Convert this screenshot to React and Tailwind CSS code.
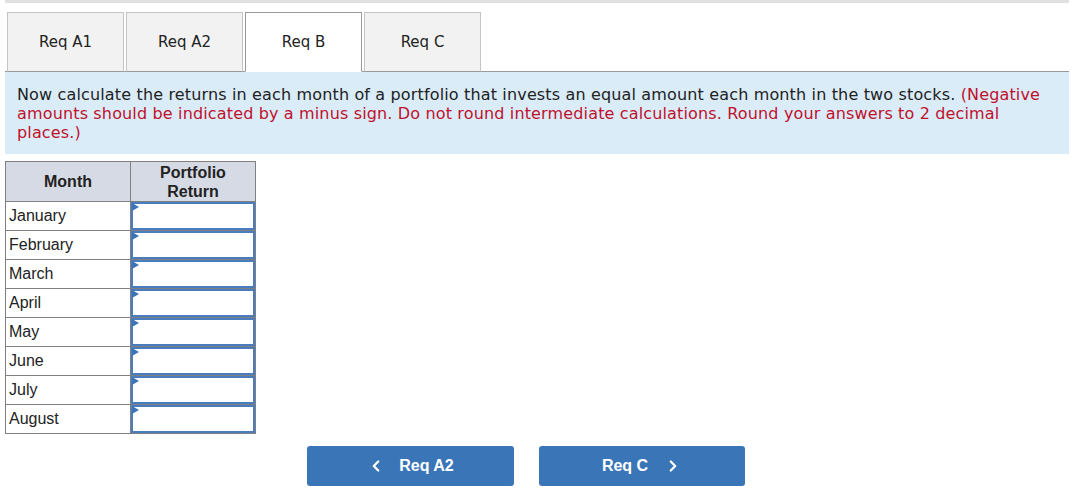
import React from "react";
import { ChevronLeft, ChevronRight } from "lucide-react";

const TABS = [
  { label: "Req A1", active: false },
  { label: "Req A2", active: false },
  { label: "Req B", active: true },
  { label: "Req C", active: false },
];

const MONTHS = ["January", "February", "March", "April", "May", "June", "July", "August"];

function AnswerCell() {
  return (
    <div className="relative h-[28px] w-full border-2 border-[#4a7dbf] bg-white">
      {/* little marker in the corner */}
      <div className="absolute left-[-1px] top-[-1px] h-0 w-0 border-y-[4px] border-l-[7px] border-y-transparent border-l-[#3d74b9]" />
      <input className="h-full w-full bg-transparent px-1 outline-none" />
    </div>
  );
}

export default function App() {
  return (
    <div className="h-[490px] w-[1085px] bg-white">
      <div className="ml-[5px] w-[1064px]">
        <div className="h-[3px] bg-[#e0e0e0]" />

        {/* tabs */}
        <div className="mt-[9px] flex gap-[2px] border-b border-[#999] pl-[2px] font-['DejaVu_Sans',Verdana,sans-serif] text-[15px] text-[#222]">
          {TABS.map((t) => (
            <div
              key={t.label}
              className={`-mb-px flex h-[60px] w-[117px] items-center justify-center border ${
                t.active
                  ? "border-[#999] border-b-white bg-white"
                  : "border-[#c4c4c4] border-b-[#999] bg-[#f2f2f2]"
              }`}
            >
              {t.label}
            </div>
          ))}
        </div>

        {/* instructions */}
        <div className="bg-[#dbecf9] px-[12px] pb-[12px] pt-[13px] font-['DejaVu_Sans',Verdana,sans-serif] text-[16px] leading-[19px] tracking-[0.15px] text-[#222]">
          Now calculate the returns in each month of a portfolio that invests an equal amount each month in the two stocks.{" "}
          <span className="text-[#c0102c]">
            (Negative amounts should be indicated by a minus sign. Do not round intermediate calculations. Round your answers to 2 decimal places.)
          </span>
        </div>

        {/* table */}
        <table className="mt-[7px] border-collapse font-['Liberation_Sans',Arial,sans-serif] text-[16px] text-[#222]">
          <thead>
            <tr className="h-[40px] bg-[#d6dae4]">
              <th className="w-[125px] border border-[#808080] font-bold leading-[19px]">Month</th>
              <th className="w-[125px] border border-[#808080] font-bold leading-[19px]">
                Portfolio
                <br />
                Return
              </th>
            </tr>
          </thead>
          <tbody>
            {MONTHS.map((m) => (
              <tr key={m} className="h-[29px]">
                <td className="border border-[#808080] px-[3px] text-left">{m}</td>
                <td className="border border-[#808080] p-0">
                  <AnswerCell />
                </td>
              </tr>
            ))}
          </tbody>
        </table>

        {/* nav buttons */}
        <div className="mt-[12px] flex gap-[25px] pl-[302px] font-['Liberation_Sans',Arial,sans-serif] text-[16px] font-bold text-white">
          <button className="flex h-[40px] w-[207px] items-center justify-center gap-[14px] rounded-[3px] bg-[#3a75b8]">
            <ChevronLeft size={18} strokeWidth={3} />
            <span>Req A2</span>
          </button>
          <button className="flex h-[40px] w-[206px] items-center justify-center gap-[16px] rounded-[3px] bg-[#3a75b8]">
            <span>Req C</span>
            <ChevronRight size={18} strokeWidth={3} />
          </button>
        </div>
      </div>
    </div>
  );
}
